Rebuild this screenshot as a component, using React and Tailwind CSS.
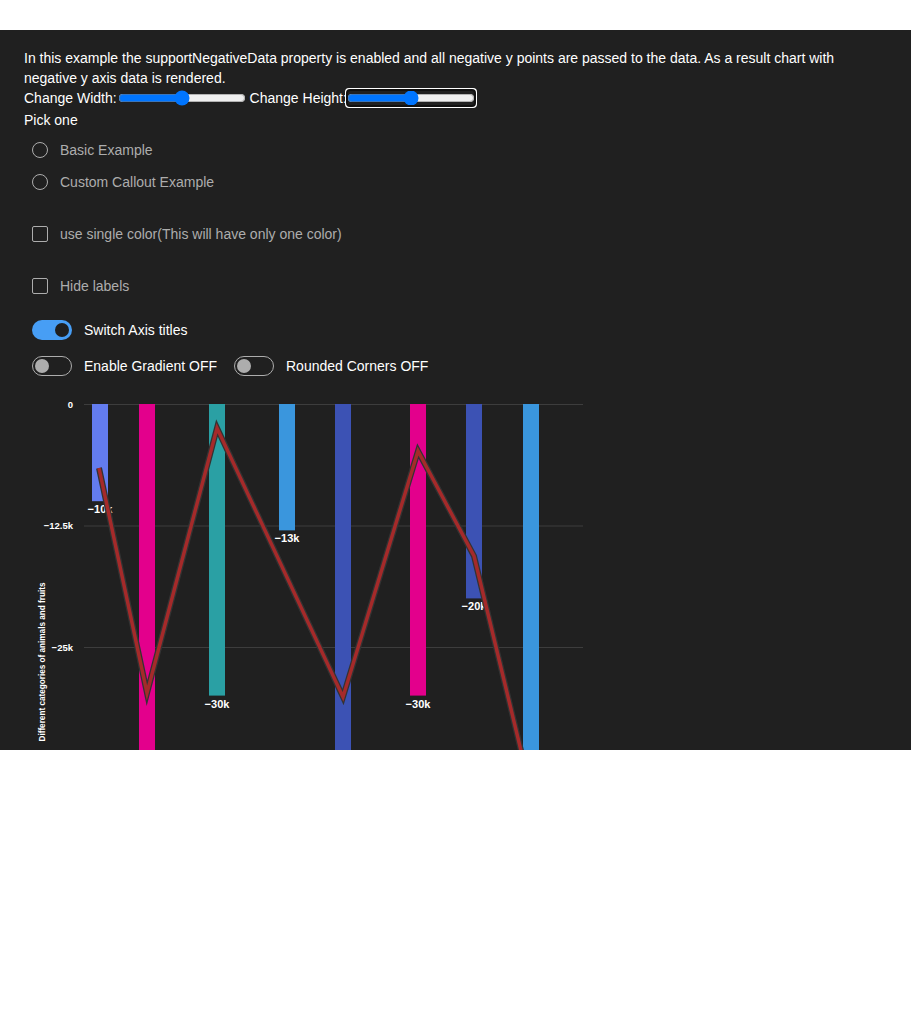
import React from "react";

const font = { fontFamily: '"Liberation Sans", Arial, sans-serif' };

function Radio({ label }) {
  return (
    <div className="flex h-8 items-center pl-2">
      <span className="h-4 w-4 rounded-full border border-[#adadad]" />
      <span className="ml-3 text-[14px] text-[#adadad]">{label}</span>
    </div>
  );
}

function Check({ label, className = "" }) {
  return (
    <div className={"flex h-8 items-center pl-2 " + className}>
      <span className="h-4 w-4 rounded-[2px] border border-[#adadad]" />
      <span className="ml-3 text-[14px] text-[#adadad]">{label}</span>
    </div>
  );
}

function Toggle({ on, label, className = "" }) {
  return (
    <div className={"flex items-center " + className}>
      {on ? (
        <span className="flex h-5 w-10 shrink-0 items-center justify-end rounded-full bg-[#479ef5] pr-[3px]">
          <span className="h-[14px] w-[14px] rounded-full bg-[#1f1f1f]" />
        </span>
      ) : (
        <span className="flex h-5 w-10 shrink-0 items-center rounded-full border border-[#adadad] pl-[2px]">
          <span className="h-[14px] w-[14px] rounded-full bg-[#adadad]" />
        </span>
      )}
      <span className="ml-3 whitespace-nowrap text-[14px] text-white">{label}</span>
    </div>
  );
}

const Y0 = 14;
const scale = 121.5 / 12.5;
const yv = (v) => Y0 + -v * scale;

const bars = [
  { x: 92, c: "#637cef", v: -10, label: "−10k" },
  { x: 139, c: "#e3008c", v: -40 },
  { x: 209, c: "#2aa0a4", v: -30, label: "−30k" },
  { x: 279, c: "#3a96dd", v: -13, label: "−13k" },
  { x: 335, c: "#3c52b4", v: -40 },
  { x: 410, c: "#e3008c", v: -30, label: "−30k" },
  { x: 466, c: "#3c52b4", v: -20, label: "−20k" },
  { x: 523, c: "#3a96dd", v: -40 },
];

const linePts = [
  [99, 78],
  [147, 303],
  [217, 38],
  [343, 307],
  [418, 61],
  [474, 166],
  [531, 402],
];

function Chart() {
  const pts = linePts.map((p) => p.join(",")).join(" ");
  return (
    <svg width="600" height="400" className="block" style={font}>
      {[0, -12.5, -25, -37.5].map((v) => (
        <line key={v} x1="84" x2="583" y1={yv(v) + 0.5} y2={yv(v) + 0.5} stroke="#3d3d3d" strokeWidth="1" />
      ))}
      {[
        [0, "0"],
        [-12.5, "−12.5k"],
        [-25, "−25k"],
      ].map(([v, t]) => (
        <text key={t} x="73" y={yv(v) + 3.5} textAnchor="end" fontSize="9.5" fontWeight="700" fill="#ffffff">
          {t}
        </text>
      ))}
      <text
        transform="translate(45,272) rotate(-90)"
        textAnchor="middle"
        fontSize="9"
        fontWeight="700"
        fill="#ffffff"
        textLength="159"
        lengthAdjust="spacingAndGlyphs"
      >
        Different categories of animals and fruits
      </text>
      {bars.map((b, i) => (
        <rect key={i} x={b.x} y={Y0} width="16" height={yv(b.v) - Y0} fill={b.c} />
      ))}
      {bars
        .filter((b) => b.label)
        .map((b, i) => (
          <text key={i} x={b.x + 8} y={yv(b.v) + 12} textAnchor="middle" fontSize="11" fontWeight="700" fill="#ffffff">
            {b.label}
          </text>
        ))}
      <polyline points={pts} fill="none" stroke="#333333" strokeWidth="6" strokeLinejoin="miter" strokeMiterlimit="10" />
      <polyline points={pts} fill="none" stroke="#a52a2a" strokeWidth="3.5" strokeLinejoin="miter" strokeMiterlimit="10" />
    </svg>
  );
}

export default function App() {
  return (
    <div className="h-[1033px] bg-white pt-[30px]" style={font}>
      <div className="h-[720px] overflow-hidden bg-[#202020]">
        <div className="px-6 pt-[18px]">
          <div className="whitespace-nowrap text-[14px] leading-5 text-white">
            In this example the supportNegativeData property is enabled and all negative y points are passed to the data. As a result chart with
            <br />
            negative y axis data is rendered.
          </div>
          <div className="flex h-5 items-center text-[14px] text-white">
            <span>Change Width:</span>
            <input type="range" defaultValue={50} className="mx-px w-[128px]" />
            <span className="ml-[3px]">Change Height:</span>
            <input type="range" defaultValue={50} autoFocus className="w-[128px]" />
          </div>
          <div className="mt-[2px] text-[14px] leading-5 text-white">Pick one</div>
          <div className="mt-1">
            <Radio label="Basic Example" />
            <Radio label="Custom Callout Example" />
          </div>
          <Check label="use single color(This will have only one color)" className="mt-5" />
          <Check label="Hide labels" className="mt-5" />
          <div className="mt-3 flex h-8 items-center pl-2">
            <Toggle on label="Switch Axis titles" />
          </div>
          <div className="mt-1 flex h-8 items-center pl-2">
            <Toggle label="Enable Gradient OFF" className="w-[202px]" />
            <Toggle label="Rounded Corners OFF" />
          </div>
        </div>
        <div className="mt-2">
          <Chart />
        </div>
      </div>
    </div>
  );
}
